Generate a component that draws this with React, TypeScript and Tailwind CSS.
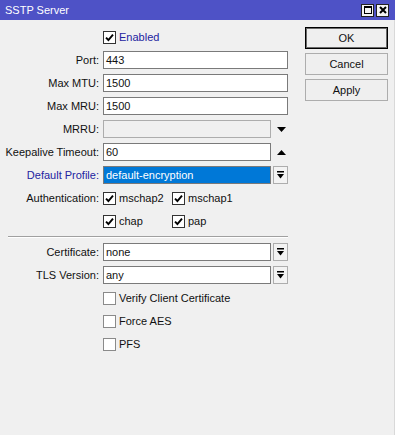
import type { ReactNode } from "react";

function CheckBox({ checked }: { checked?: boolean }) {
  return (
    <span
      className={`flex h-[13px] w-[13px] shrink-0 items-center justify-center border bg-white ${
        checked ? "border-[#333333]" : "border-[#8a8a8a]"
      }`}
    >
      {checked && (
        <svg width="9" height="9" viewBox="0 0 9 9">
          <path d="M1 4.6 L3.4 7 L8 1.6" fill="none" stroke="#000" strokeWidth="1.9" />
        </svg>
      )}
    </span>
  );
}

function Labeled({ checked, text, blue }: { checked?: boolean; text: string; blue?: boolean }) {
  return (
    <span className="flex items-center gap-[3px] whitespace-nowrap">
      <CheckBox checked={checked} />
      <span className={blue ? "text-[#2323a0]" : ""}>{text}</span>
    </span>
  );
}

function Row({ label, blue, children }: { label?: string; blue?: boolean; children: ReactNode }) {
  return (
    <div className="flex h-[18px] items-center">
      <div
        className={`flex w-[95px] justify-end whitespace-nowrap pr-[4px] ${blue ? "text-[#2323a0]" : ""}`}
      >
        {label}
      </div>
      <div className="flex w-[185px] items-center">{children}</div>
    </div>
  );
}

function Field({ value, short }: { value?: string; short?: boolean }) {
  return (
    <div
      className={`h-[18px] border border-[#7a7a7a] bg-white px-[2px] leading-[16px] ${
        short ? "w-[168px]" : "w-[185px]"
      }`}
    >
      {value}
    </div>
  );
}

function DropButton() {
  return (
    <div className="ml-[2px] flex h-[18px] w-[15px] items-center justify-center border border-[#adadad] bg-[#f3f3f3]">
      <svg width="7" height="8" viewBox="0 0 7 8">
        <rect x="0" y="0" width="7" height="1.5" fill="#000" />
        <path d="M0 3 H7 L3.5 7.5 Z" fill="#000" />
      </svg>
    </div>
  );
}

function Arrow({ up }: { up?: boolean }) {
  return (
    <svg className="ml-[6px]" width="9" height="5" viewBox="0 0 9 5">
      {up ? <path d="M0 5 H9 L4.5 0 Z" fill="#000" /> : <path d="M0 0 H9 L4.5 5 Z" fill="#000" />}
    </svg>
  );
}

function WinButton({ label, primary }: { label: string; primary?: boolean }) {
  return (
    <div
      className={`flex h-[22px] w-[83px] items-center justify-center bg-[#efefef] ${
        primary ? "border border-black shadow-[inset_0_0_0_1px_#6a6a6a]" : "border border-[#adadad]"
      }`}
    >
      {label}
    </div>
  );
}

export default function App() {
  return (
    <div
      className="flex h-[435px] w-[395px] flex-col bg-[#f0f0f0] text-[11px] text-[#111111]"
      style={{ fontFamily: '"Liberation Sans", Arial, sans-serif' }}
    >
      <div className="flex h-[20px] items-center justify-between bg-[#4e52c6] pl-[5px] pr-[6px]">
        <span className="text-[11px] text-white">SSTP Server</span>
        <div className="flex gap-[2px]">
          <span className="flex h-[13px] w-[13px] items-center justify-center border border-[#222222] bg-[#f4f4f4]">
            <span className="h-[8px] w-[8px] border border-black border-t-2" />
          </span>
          <span className="flex h-[13px] w-[13px] items-center justify-center border border-[#222222] bg-[#f4f4f4]">
            <svg width="8" height="8" viewBox="0 0 8 8">
              <path d="M1 1 L7 7 M7 1 L1 7" stroke="#000" strokeWidth="2" />
            </svg>
          </span>
        </div>
      </div>

      <div className="flex flex-1 border-r border-[#d9d9d9] pt-[7px]">
        <div className="flex flex-col gap-[5px] pl-[8px] pt-[1px]">
          <Row>
            <Labeled checked text="Enabled" blue />
          </Row>
          <Row label="Port:">
            <Field value="443" />
          </Row>
          <Row label="Max MTU:">
            <Field value="1500" />
          </Row>
          <Row label="Max MRU:">
            <Field value="1500" />
          </Row>
          <Row label="MRRU:">
            <div className="h-[18px] w-[168px] border border-[#adadad] bg-[#f0f0f0]" />
            <Arrow />
          </Row>
          <Row label="Keepalive Timeout:">
            <Field value="60" short />
            <Arrow up />
          </Row>
          <Row label="Default Profile:" blue>
            <div className="h-[18px] w-[168px] border border-[#7a7a7a] bg-[#0078d7] px-[2px] leading-[16px] text-white">
              default-encryption
            </div>
            <DropButton />
          </Row>
          <Row label="Authentication:">
            <div className="w-[69px]">
              <Labeled checked text="mschap2" />
            </div>
            <Labeled checked text="mschap1" />
          </Row>
          <Row>
            <div className="w-[69px]">
              <Labeled checked text="chap" />
            </div>
            <Labeled checked text="pap" />
          </Row>
          <div className="mt-[1px] h-[2px] w-[280px] border-t border-b border-t-[#a0a0a0] border-b-white" />
          <Row label="Certificate:">
            <Field value="none" short />
            <DropButton />
          </Row>
          <Row label="TLS Version:">
            <Field value="any" short />
            <DropButton />
          </Row>
          <Row>
            <Labeled text="Verify Client Certificate" />
          </Row>
          <Row>
            <Labeled text="Force AES" />
          </Row>
          <Row>
            <Labeled text="PFS" />
          </Row>
        </div>

        <div className="ml-[17px] flex flex-col gap-[4px]">
          <WinButton label="OK" primary />
          <WinButton label="Cancel" />
          <WinButton label="Apply" />
        </div>
      </div>
    </div>
  );
}
